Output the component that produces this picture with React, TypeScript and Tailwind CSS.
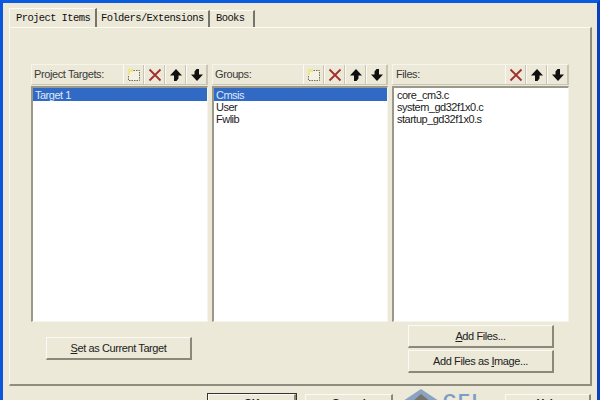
const ui = { fontFamily: '"Liberation Sans", Arial, sans-serif' };
const mono = { fontFamily: '"Liberation Mono", "Courier New", monospace' };

function NewIcon() {
  return (
    <svg width="14" height="14" viewBox="0 0 14 14">
      <rect x="1.5" y="2.5" width="11" height="10" fill="#f4f2e4" stroke="#6d6a55" strokeDasharray="1.5 1" />
      <path d="M1 1h5v3H3v3H1z" fill="#efe68a" />
    </svg>
  );
}
function DelIcon() {
  return (
    <svg width="14" height="14" viewBox="0 0 14 14">
      <path d="M1.5 1.5l11 11M12.5 1.5l-11 11" stroke="#a0312c" strokeWidth="1.8" fill="none" />
    </svg>
  );
}
function UpIcon() {
  return (
    <svg width="14" height="14" viewBox="0 0 14 14">
      <path d="M7 1L13 7.5H9.5V10.5L7.5 13H5V7.5H1Z" fill="#111" />
    </svg>
  );
}
function DownIcon() {
  return (
    <svg width="14" height="14" viewBox="0 0 14 14">
      <path d="M7 13L1 6.5H4.5V3.5L6.5 1H9V6.5H13Z" fill="#111" />
    </svg>
  );
}
function Tool({ children }: { children: React.ReactNode }) {
  return (
    <div className="w-[21px] h-[19px] flex items-center justify-center border-r border-r-[#c8c5b2] border-l border-l-[#fbfaf4]">
      {children}
    </div>
  );
}
function Column({ w, title, tools, items, selected, inset }: { w: string; title: string; tools: React.ReactNode; items: string[]; selected?: number; inset?: boolean }) {
  return (
    <div className={`${w} flex flex-col`}>
      <div className={`h-[21px] flex items-center justify-between ${inset ? "pl-[3px]" : "pl-[2px]"} border-t border-l border-t-[#f6f5ec] border-l-[#f6f5ec] border-b border-r border-b-[#c9c6b3] border-r-[#c9c6b3] text-[11px] tracking-[-0.4px] text-[#3a3a3a]`}>
        <span>{title}</span>
        <div className="flex">{tools}</div>
      </div>
      <div className="mt-[1px] h-[236px] bg-white border-t-2 border-l-2 border-t-[#9a988b] border-l-[#9a988b] border-b border-r border-b-[#f6f5ec] border-r-[#f6f5ec] text-[11px] leading-[12px] tracking-[-0.5px] text-[#222]">
        {items.map((t, i) => (
          <div key={t} className={i === selected ? "h-[13px] pl-[2px] pt-[1px] bg-[#316ac5] text-[#dfe8f7]" : `h-[12px] ${inset ? "pl-[3px]" : "pl-[2px]"} ${selected === undefined && i === 0 ? "mt-[1px]" : ""}`}>
            {t}
          </div>
        ))}
      </div>
    </div>
  );
}
function Btn({ w, h, children, dark }: { w: string; h: string; children: React.ReactNode; dark?: boolean }) {
  return (
    <div className={`${w} ${h} flex items-center justify-center pt-[1px] text-[11px] tracking-[-0.4px] text-[#222] bg-[#ece9d8] border-t border-l border-t-[#fbfaf4] border-l-[#fbfaf4] border-b-2 border-r-2 border-b-[#8a887b] border-r-[#8a887b] ${dark ? "outline outline-1 outline-[#333]" : ""}`}>
      {children}
    </div>
  );
}

export default function App() {
  return (
    <div className="w-[600px] h-[400px] overflow-hidden bg-[#ece9d8] border-l-[3px] border-l-[#0a56dc] border-r-[3px] border-r-[#0b3fbd] border-t-[3px] border-t-[#0a5be0] flex flex-col" style={ui}>
      <div className="pl-[6px] pr-[5px] pt-[7px] flex flex-col">
        <div className="flex items-end h-[17px] text-[10.5px] tracking-[-0.6px] text-[#111] whitespace-nowrap" style={mono}>
          <div className="h-[19px] w-[88px] pl-[6px] pt-[2px] border-t border-l border-[#fbfaf4] border-r-2 border-r-[#77756a] relative z-10 bg-[#ece9d8]">Project Items</div>
          <div className="h-[17px] w-[113px] flex items-center pl-[4px] border-r-2 border-r-[#77756a] border-t border-t-[#fbfaf4]">Folders/Extensions</div>
          <div className="h-[17px] w-[45px] flex items-center pl-[6px] border-r-2 border-r-[#77756a] border-t border-t-[#fbfaf4]">Books</div>
        </div>
        <div className="h-[359px] border-t border-t-[#fbfaf4] border-l border-l-[#fbfaf4] border-r-2 border-r-[#8f8d7e] border-b-2 border-b-[#8f8d7e] pl-[21px] pt-[36px]">
          <div className="flex gap-[4px]">
            <Column w="w-[177px]" title="Project Targets:" items={["Target 1"]} selected={0}
              tools={<><Tool><NewIcon /></Tool><Tool><DelIcon /></Tool><Tool><UpIcon /></Tool><Tool><DownIcon /></Tool></>} />
            <Column w="w-[176px]" title="Groups:" items={["Cmsis", "User", "Fwlib"]} selected={0}
              tools={<><Tool><NewIcon /></Tool><Tool><DelIcon /></Tool><Tool><UpIcon /></Tool><Tool><DownIcon /></Tool></>} />
            <Column w="w-[177px]" inset title="Files:" items={["core_cm3.c", "system_gd32f1x0.c", "startup_gd32f1x0.s"]}
              tools={<><Tool><DelIcon /></Tool><Tool><UpIcon /></Tool><Tool><DownIcon /></Tool></>} />
          </div>
          <div className="flex">
            <div className="ml-[15px] mt-[15px]">
              <Btn w="w-[146px]" h="h-[23px]"><span><u>S</u>et as Current Target</span></Btn>
            </div>
            <div className="ml-[216px] mt-[3px] flex flex-col gap-[2px]">
              <Btn w="w-[146px]" h="h-[23px]"><span><u>A</u>dd Files...</span></Btn>
              <Btn w="w-[146px]" h="h-[23px]"><span>Add Files as <u>I</u>mage...</span></Btn>
            </div>
          </div>
        </div>
      </div>
      <div className="flex pl-[205px] pt-[8px] items-start">
        <Btn w="w-[88px]" h="h-[18px]" dark><span className="font-bold">OK</span></Btn>
        <div className="ml-[9px]"><Btn w="w-[88px]" h="h-[18px]"><span className="font-bold">Cancel</span></Btn></div>
        <div className="ml-[10px] w-[102px] h-[18px] flex items-start -mt-[5px]">
          <svg width="40" height="14" viewBox="0 0 40 14"><path d="M0 12L18 0l18 12z" fill="#8aa3c2" /><path d="M9 13l9-8 10 8z" fill="#77756a" /></svg>
          <span className="mt-[3px] text-[18px] leading-[18px] tracking-[2px] font-bold text-[#7d9cc9]">CEI</span>
        </div>
        <Btn w="w-[86px]" h="h-[18px]"><span className="font-bold">Help</span></Btn>
      </div>
    </div>
  );
}
